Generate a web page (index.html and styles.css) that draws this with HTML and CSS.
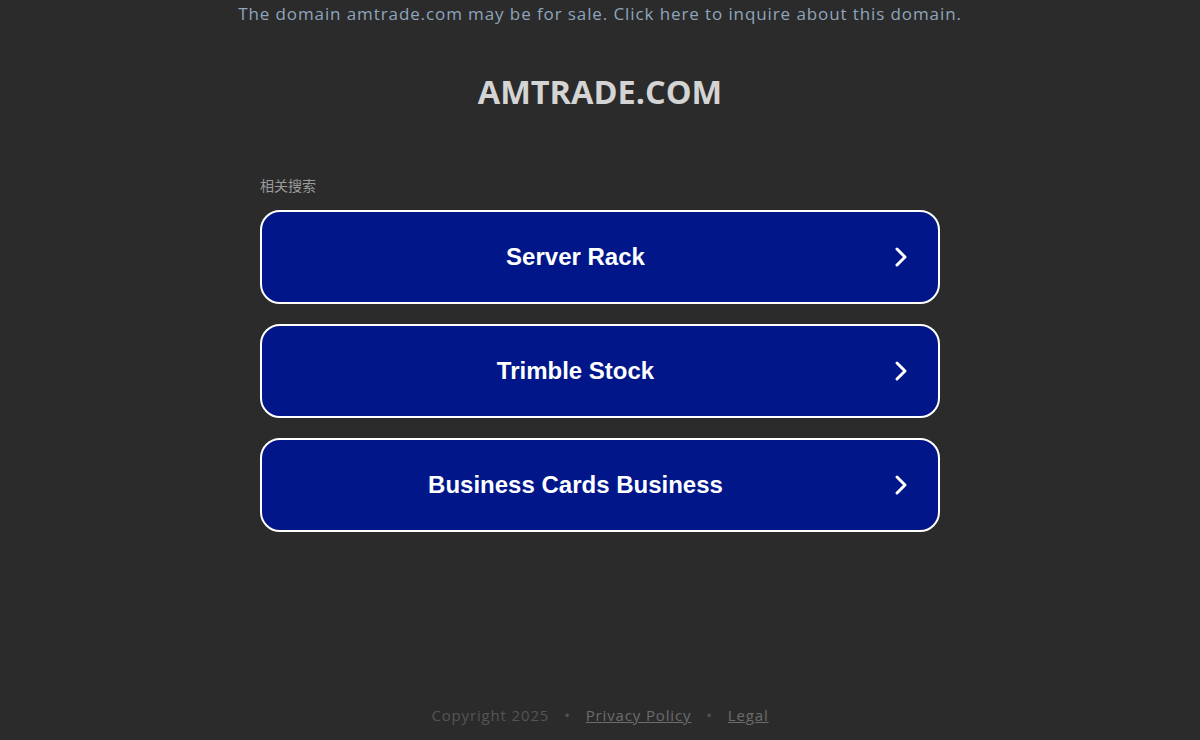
FILE: index.html
```html
<!DOCTYPE html>
<html lang="en">
<head>
<meta charset="utf-8">
<title>amtrade.com</title>
<link rel="stylesheet" href="styles.css">
</head>
<body>
<div class="page">
  <a class="sale" href="#">The domain amtrade.com may be for sale. Click here to inquire about this domain.</a>
  <h1 class="domain">AMTRADE.COM</h1>
  <div class="related">
    <div class="label">相关搜索</div>
    <a class="btn" href="#"><span class="btn-text">Server Rack</span><svg class="chev" viewBox="0 0 24 24" width="24" height="24"><path d="M8 4 L16 12 L8 20" fill="none" stroke="#fff" stroke-width="3" stroke-linecap="round" stroke-linejoin="round"/></svg></a>
    <a class="btn" href="#"><span class="btn-text">Trimble Stock</span><svg class="chev" viewBox="0 0 24 24" width="24" height="24"><path d="M8 4 L16 12 L8 20" fill="none" stroke="#fff" stroke-width="3" stroke-linecap="round" stroke-linejoin="round"/></svg></a>
    <a class="btn" href="#"><span class="btn-text">Business Cards Business</span><svg class="chev" viewBox="0 0 24 24" width="24" height="24"><path d="M8 4 L16 12 L8 20" fill="none" stroke="#fff" stroke-width="3" stroke-linecap="round" stroke-linejoin="round"/></svg></a>
  </div>
  <div class="footer">
    <span>Copyright 2025</span>
    <span class="dot">•</span>
    <a href="#">Privacy Policy</a>
    <span class="dot">•</span>
    <a href="#">Legal</a>
  </div>
</div>
</body>
</html>
```

FILE: styles.css
```css
html, body {
  margin: 0;
  padding: 0;
  background: #2b2b2b;
}
.page {
  height: 740px;
  display: flex;
  flex-direction: column;
  align-items: center;
  font-family: "Open Sans", "DejaVu Sans", sans-serif;
}
.sale {
  margin-top: 3px;
  font-size: 17px;
  line-height: 22px;
  color: #8fa5bb;
  text-decoration: none;
  letter-spacing: 0.9px;
}
.domain {
  margin: 45px 0 0 0;
  font-size: 32.5px;
  line-height: 44px;
  font-weight: 700;
  color: #d4d4d4;
}
.related {
  width: 680px;
  margin-top: 62px;
  display: flex;
  flex-direction: column;
}
.label {
  font-family: "Noto Sans CJK SC", sans-serif;
  font-size: 14px;
  line-height: 18px;
  color: #9a9a9a;
  margin-bottom: 16px;
}
.btn {
  box-sizing: border-box;
  height: 94px;
  margin-bottom: 20px;
  display: flex;
  align-items: center;
  background: #001689;
  border: 2px solid #ffffff;
  border-radius: 20px;
  text-decoration: none;
}
.btn-text {
  flex: 1;
  text-align: center;
  font-family: "Liberation Sans", Arial, sans-serif;
  font-weight: 700;
  font-size: 24px;
  color: #ffffff;
}
.chev {
  margin-right: 25px;
  flex: none;
}
.footer {
  margin-top: auto;
  margin-bottom: 14px;
  display: flex;
  gap: 15px;
  font-size: 15px;
  line-height: 22px;
  color: #555555;
  letter-spacing: 0.85px;
}
.footer a {
  color: #6c6c6c;
  text-decoration: underline;
}
.dot {
  color: #555555;
}
```
